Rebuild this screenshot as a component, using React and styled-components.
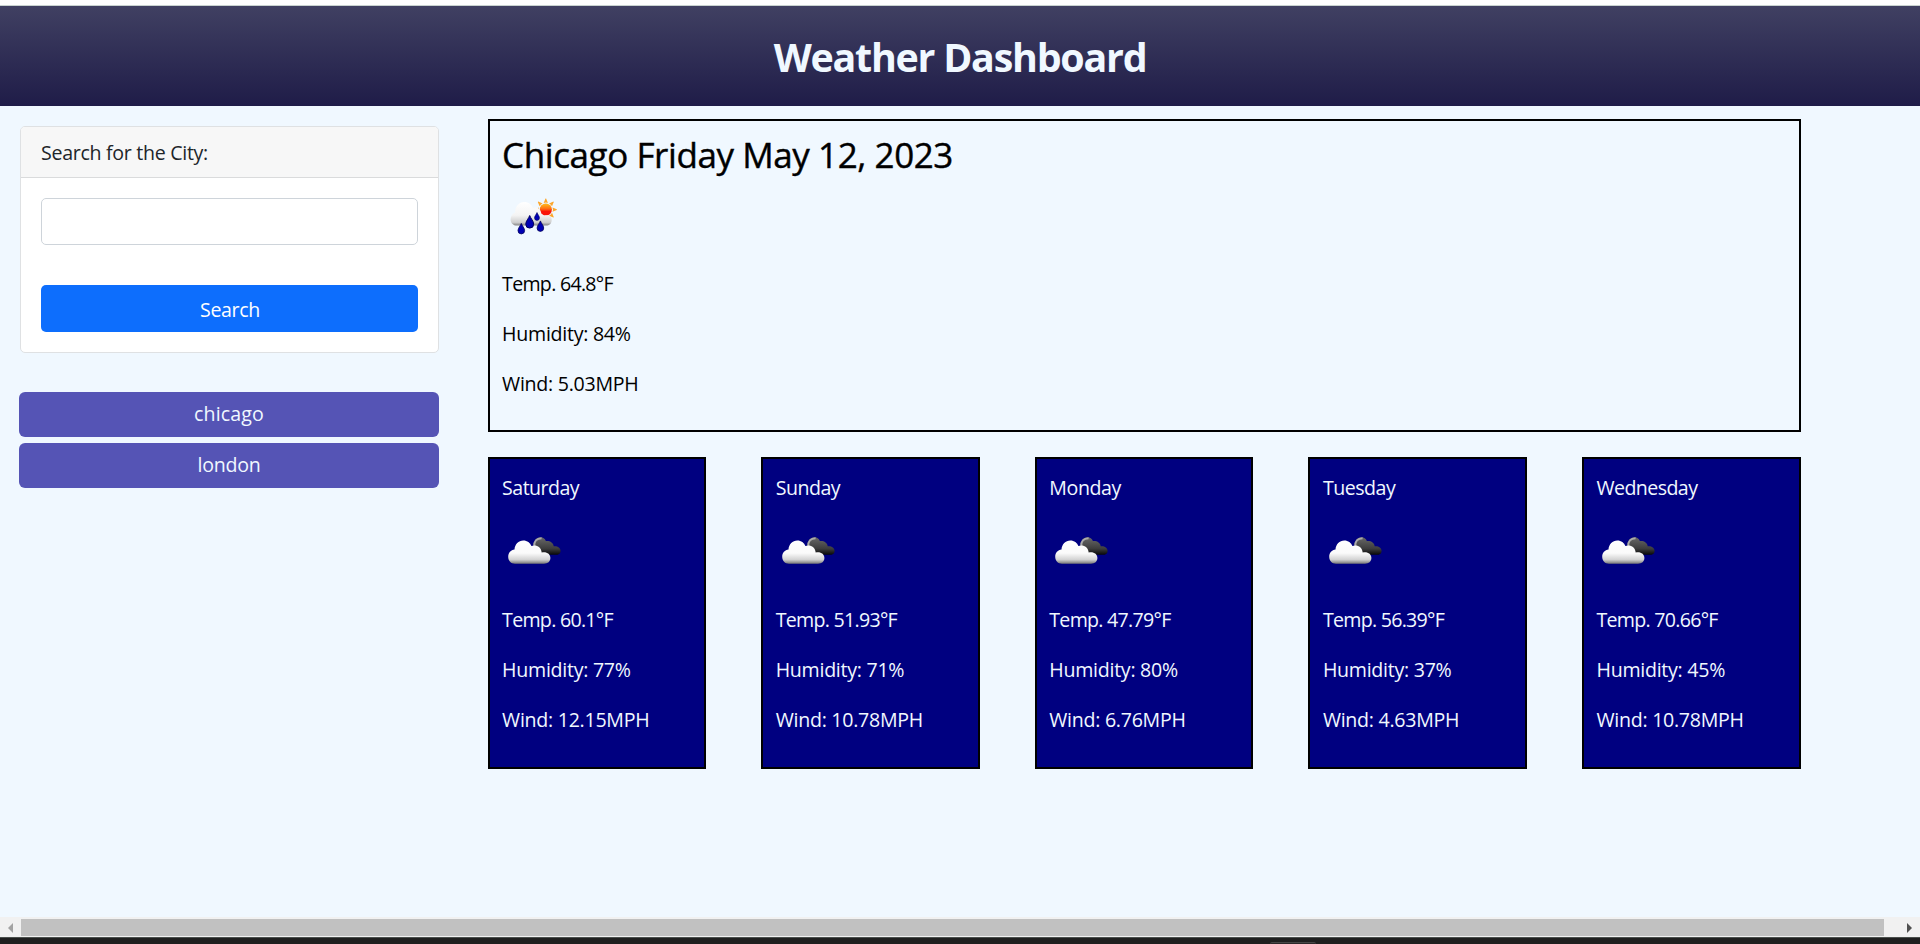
import React from 'react';
import styled, { createGlobalStyle } from 'styled-components';

const GlobalStyle = createGlobalStyle`
  *, *::before, *::after { box-sizing: border-box; }
  html, body { margin: 0; padding: 0; overflow: hidden; }
  body {
    background: #f0f8ff;
    color: #212529;
    font-family: "Open Sans", "Noto Sans", sans-serif;
    font-size: 19.6px;
    line-height: 30px;
  }
`;

const Page = styled.div`
  display: flex;
  flex-direction: column;
  width: 1920px;
  height: 944px;
`;

const TopStrip = styled.div`
  flex: none;
  height: 6px;
  background: #fff;
  border-bottom: 1px solid #c9d3d0;
`;

const Header = styled.header`
  flex: none;
  display: flex;
  justify-content: center;
  height: 100px;
  padding-top: 27px;
  background: linear-gradient(#404062, #1f1c48);
`;

const Title = styled.h1`
  margin: 0;
  color: #f0f8ff;
  font-size: 39.4px;
  font-weight: 700;
  line-height: 48px;
  letter-spacing: -1.25px;
`;

const Content = styled.div`
  flex: 1;
  min-height: 0;
  display: flex;
  align-items: flex-start;
  gap: 48.6px;
  padding: 13px 119.4px 0 19px;
`;

const Sidebar = styled.aside`
  flex: none;
  width: 420px;
  padding-top: 7px;
`;

const SearchCard = styled.section`
  margin-left: 1px;
  height: 227px;
  border: 1px solid #dfe1e3;
  border-radius: 5px;
  background: #fff;
  overflow: hidden;
`;

const SearchCardHeader = styled.div`
  height: 51px;
  padding: 11px 20px 9px;
  border-bottom: 1px solid #dadbdc;
  background: #f7f7f7;
`;

const SearchForm = styled.form`
  display: flex;
  flex-direction: column;
  gap: 40px;
  padding: 20px;
`;

const CityInput = styled.input`
  width: 100%;
  height: 47px;
  padding: 8px 15px;
  border: 1px solid #ced4da;
  border-radius: 5px;
  background: #fff;
  font: inherit;
  outline: none;
`;

const Button = styled.button`
  display: flex;
  align-items: center;
  justify-content: center;
  width: 100%;
  padding: 0;
  border: 0;
  font: inherit;
`;

const SearchButton = styled(Button)`
  height: 47px;
  padding: 2px 0 0 1px;
  border-radius: 5px;
  background: #0d6efd;
  color: #fff;
`;

const History = styled.div`
  display: flex;
  flex-direction: column;
  gap: 6px;
  margin-top: 39px;
`;

const HistoryButton = styled(Button)`
  height: 45px;
  padding-bottom: 1px;
  border-radius: 6px;
  background: #5554b5;
  color: #f0f8ff;
`;

const Main = styled.main`
  flex: 1;
  display: flex;
  flex-direction: column;
  gap: 25px;
`;

const Panel = styled.section`
  display: flex;
  flex-direction: column;
  align-items: flex-start;
  border: 2px solid #000;
`;

const CurrentPanel = styled(Panel)`
  height: 313px;
  padding: 13px 12.5px;
  color: #000;
`;

const CurrentHeading = styled.h2`
  margin: 0;
  font-size: 35px;
  font-weight: 500;
  line-height: 42px;
  letter-spacing: -0.42px;
  -webkit-text-stroke: 0.4px currentColor;
`;

const ForecastRow = styled.div`
  display: grid;
  grid-template-columns: repeat(5, 218.6px);
  justify-content: space-between;
`;

const ForecastCard = styled(Panel)`
  height: 312px;
  padding: 14px 12.5px;
  background: #000080;
  color: #f0f8ff;
`;

const Text = styled.span`
  display: block;
  white-space: nowrap;
  letter-spacing: ${(p) => p.$track ?? 0}px;
`;

const Readings = styled.div`
  display: flex;
  flex-direction: column;
  gap: 20px;
`;

const Icon = styled.svg`
  display: block;
  flex: none;
  width: 62px;
  height: 62px;
  margin: ${(p) => p.$margin};
`;

const Scrollbar = styled.div`
  flex: none;
  display: flex;
  height: 20px;
  padding: 2px 0 1px;
  background: #f1f1f1;
`;

const ScrollArrow = styled.div`
  display: flex;
  align-items: center;
  justify-content: ${(p) => (p.$end ? 'flex-end' : 'flex-start')};
  width: ${(p) => (p.$end ? 36 : 21)}px;
  padding: 0 8px;
`;

const ScrollThumb = styled.div`
  flex: 1;
  background: #c1c1c1;
`;

const Taskbar = styled.div`
  flex: none;
  height: 7px;
  padding: 4px 0 0 1270px;
  border-top: 1px solid #4b504d;
  background: #1f1f1f;
`;

const TaskbarTab = styled.div`
  width: 46px;
  height: 2px;
  border-top: 1px solid #464646;
  border-radius: 3px 3px 0 0;
  background: #2b2829;
`;

function RainIcon() {
  const drops = [
    [19.3, 42.8, 1],
    [27.7, 36, 1.2],
    [35, 30.6, 0.75],
    [38.4, 40.3, 1],
  ];
  return (
    <Icon viewBox="0 0 62 62" $margin="10px 0 21px">
      <defs>
        <linearGradient id="rainCloud" x1="0" y1="16" x2="0" y2="40" gradientUnits="userSpaceOnUse">
          <stop offset="0" stopColor="#fff" />
          <stop offset="0.55" stopColor="#f4f4f4" />
          <stop offset="0.85" stopColor="#cfcfcf" />
          <stop offset="1" stopColor="#777" />
        </linearGradient>
        <linearGradient id="sun" x1="0" y1="0" x2="0" y2="1">
          <stop offset="0.1" stopColor="#ffae1a" />
          <stop offset="0.45" stopColor="#ff6a12" />
          <stop offset="0.65" stopColor="#fa1408" />
        </linearGradient>
      </defs>
      <g transform="translate(43.8 23.6)" fill="#fba62c">
        {[-90, -45, 0, 45, 90, 135].map((a) => (
          <path key={a} transform={`rotate(${a})`} d="M-2.1 -6.7Q0 -7.7 2.1 -6.7L0.3 -11H-0.3Z" />
        ))}
        <circle r="6.1" fill="url(#sun)" />
      </g>
      <path
        fill="url(#rainCloud)"
        d="M15 39.6C11 39.6 8.6 36.7 8.6 33.4C8.6 30 10.7 27.5 13 26.6C13.2 20.5 17 16 22.2 16C26.6 16 29.6 18.6 31 22.2C34 20.3 38.7 21.5 39.5 28.3C41 28.6 41.4 29 42 29.7C46.3 28.5 50 30.5 49.7 34.2C49.5 37.6 47.4 39.6 44 39.6Z"
      />
      {drops.map(([x, y, s]) => (
        <path
          key={x}
          transform={`translate(${x} ${y}) scale(${s})`}
          d="M0 -5.4C0.8 -3 3.3 -0.8 3.3 1.8A3.3 3.3 0 0 1 -3.3 1.8C-3.3 -0.8 -0.8 -3 0 -5.4Z"
          fill="#0000b4"
          stroke="#000058"
          strokeWidth="0.8"
        />
      ))}
    </Icon>
  );
}

function CloudsIcon() {
  return (
    <Icon viewBox="0 0 62 62" $margin="17px 0 23px">
      <defs>
        <linearGradient id="backCloud" x1="0" y1="17" x2="0" y2="35" gradientUnits="userSpaceOnUse">
          <stop offset="0" stopColor="#696969" />
          <stop offset="0.65" stopColor="#3d3d3d" />
          <stop offset="1" stopColor="#050505" />
        </linearGradient>
        <linearGradient id="frontCloud" x1="0" y1="20" x2="0" y2="44" gradientUnits="userSpaceOnUse">
          <stop offset="0" stopColor="#fff" />
          <stop offset="0.55" stopColor="#fafafa" />
          <stop offset="0.82" stopColor="#d2d2d2" />
          <stop offset="1" stopColor="#707070" />
        </linearGradient>
      </defs>
      <path
        fill="url(#backCloud)"
        d="M31.5 27C31 21.5 34 17.3 38.6 17.3C41 17.3 42.8 18.6 43.9 21C48 20.6 51.3 22.6 51.7 26.2C55.6 25.8 58.5 27.8 58.6 30.9C58.6 33.6 56.5 34.8 53.5 34.8H42Z"
      />
      <path d="M32.2 26.5C31.8 21.6 34.7 18.1 39.6 18.2" fill="none" stroke="#aaa" strokeWidth="1.9" />
      <path
        fill="url(#frontCloud)"
        d="M13 43.7C9 43.7 6.2 40.9 6.2 36.7C6.2 32.7 8.9 29.8 12.5 29.4C12.8 24.2 16.6 20.4 21.3 20.4C25.2 20.4 28.3 22.7 29.4 26C33.8 24.3 39.2 26.4 39.7 32.5C44.7 31.5 48.4 34 48.4 38C48.4 41.5 45.8 43.7 42 43.7Z"
      />
    </Icon>
  );
}

const forecast = [
  { day: 'Saturday', track: -0.55, temp: '60.1', humidity: 77, wind: '12.15' },
  { day: 'Sunday', track: -0.5, temp: '51.93', humidity: 71, wind: '10.78' },
  { day: 'Monday', track: -0.4, temp: '47.79', humidity: 80, wind: '6.76' },
  { day: 'Tuesday', track: -0.5, temp: '56.39', humidity: 37, wind: '4.63' },
  { day: 'Wednesday', track: -0.58, temp: '70.66', humidity: 45, wind: '10.78' },
];

function WeatherReadings({ temp, humidity, wind }) {
  return (
    <Readings>
      <Text $track={-0.72}>{`Temp. ${temp}°F`}</Text>
      <Text $track={-0.27}>{`Humidity: ${humidity}%`}</Text>
      <Text $track={-0.27}>{`Wind: ${wind}MPH`}</Text>
    </Readings>
  );
}

export default function App() {
  return (
    <Page>
      <GlobalStyle />
      <TopStrip />
      <Header>
        <Title>Weather Dashboard</Title>
      </Header>
      <Content>
        <Sidebar>
          <SearchCard>
            <SearchCardHeader>
              <Text $track={-0.3}>Search for the City:</Text>
            </SearchCardHeader>
            <SearchForm>
              <CityInput type="text" />
              <SearchButton type="button">
                <Text $track={-0.38}>Search</Text>
              </SearchButton>
            </SearchForm>
          </SearchCard>
          <History>
            <HistoryButton type="button">
              <Text $track={0.15}>chicago</Text>
            </HistoryButton>
            <HistoryButton type="button">
              <Text $track={-0.25}>london</Text>
            </HistoryButton>
          </History>
        </Sidebar>
        <Main>
          <CurrentPanel>
            <CurrentHeading>Chicago Friday May 12, 2023</CurrentHeading>
            <RainIcon />
            <WeatherReadings temp="64.8" humidity={84} wind="5.03" />
          </CurrentPanel>
          <ForecastRow>
            {forecast.map((f) => (
              <ForecastCard key={f.day}>
                <Text $track={f.track}>{f.day}</Text>
                <CloudsIcon />
                <WeatherReadings temp={f.temp} humidity={f.humidity} wind={f.wind} />
              </ForecastCard>
            ))}
          </ForecastRow>
        </Main>
      </Content>
      <Scrollbar>
        <ScrollArrow>
          <svg width="5" height="10" viewBox="0 0 5 10">
            <path d="M5 0V10L0 5Z" fill="#a3a3a3" />
          </svg>
        </ScrollArrow>
        <ScrollThumb />
        <ScrollArrow $end>
          <svg width="5" height="10" viewBox="0 0 5 10">
            <path d="M0 0V10L5 5Z" fill="#505050" />
          </svg>
        </ScrollArrow>
      </Scrollbar>
      <Taskbar>
        <TaskbarTab />
      </Taskbar>
    </Page>
  );
}
